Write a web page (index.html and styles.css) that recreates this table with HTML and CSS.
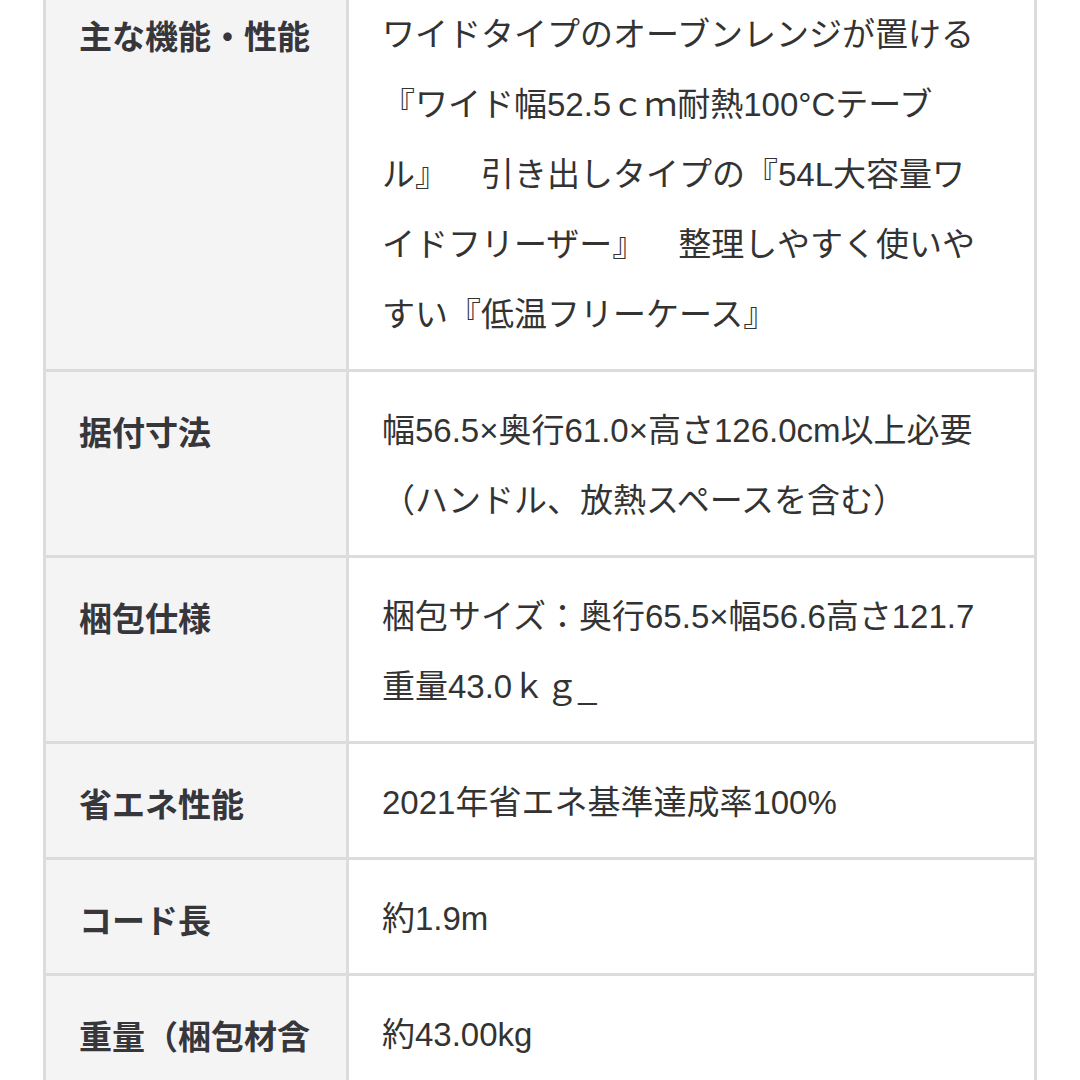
FILE: index.html
```html
<!DOCTYPE html>
<html lang="ja">
<head>
<meta charset="utf-8">
<title>仕様</title>
<link rel="stylesheet" href="styles.css">
</head>
<body>
<table class="spec">
  <tbody>
    <tr>
      <th class="spec-label">主な機能・性能</th>
      <td class="spec-value">ワイドタイプのオーブンレンジが置ける<br>『ワイド幅52.5ｃｍ耐熱100°Cテーブ<br>ル』　&#8194;引き出しタイプの『54L大容量ワ<br>イドフリーザー』　&#8194;整理しやすく使いや<br>すい『低温フリーケース』</td>
    </tr>
    <tr>
      <th class="spec-label">据付寸法</th>
      <td class="spec-value">幅56.5×奥行61.0×高さ126.0cm以上必要<br>（ハンドル、放熱スペースを含む）</td>
    </tr>
    <tr>
      <th class="spec-label">梱包仕様</th>
      <td class="spec-value">梱包サイズ：奥行65.5×幅56.6高さ121.7<br>重量43.0ｋｇ_</td>
    </tr>
    <tr>
      <th class="spec-label">省エネ性能</th>
      <td class="spec-value">2021年省エネ基準達成率100%</td>
    </tr>
    <tr>
      <th class="spec-label">コード長</th>
      <td class="spec-value">約1.9m</td>
    </tr>
    <tr>
      <th class="spec-label">重量（梱包材含む）</th>
      <td class="spec-value">約43.00kg</td>
    </tr>
  </tbody>
</table>
</body>
</html>
```
FILE: styles.css
```css
html, body {
  margin: 0;
  padding: 0;
  background: #ffffff;
}

body {
  font-family: "Liberation Sans", "Noto Sans CJK JP", sans-serif;
  color: #333333;
}

.spec {
  width: 994px;
  margin: -27px auto 0 auto;
  border-collapse: collapse;
  table-layout: fixed;
}

.spec tr {
  border-top: 3px solid #dcdcdc;
  border-bottom: 3px solid #dcdcdc;
}

.spec-label,
.spec-value {
  border: 3px solid #dcdcdc;
  vertical-align: top;
  font-size: 33px;
  line-height: 70px;
  padding-top: 24px;
  padding-bottom: 19px;
  text-align: left;
}

.spec-label {
  width: 264px;
  background: #f4f4f5;
  color: #36363b;
  font-weight: 700;
  padding-left: 33px;
  padding-right: 3px;
  font-family: "Noto Sans CJK JP", "Liberation Sans", sans-serif;
}

.spec-value {
  background: #ffffff;
  font-weight: 400;
  padding-left: 33px;
  padding-right: 20px;
  white-space: nowrap;
}
```
